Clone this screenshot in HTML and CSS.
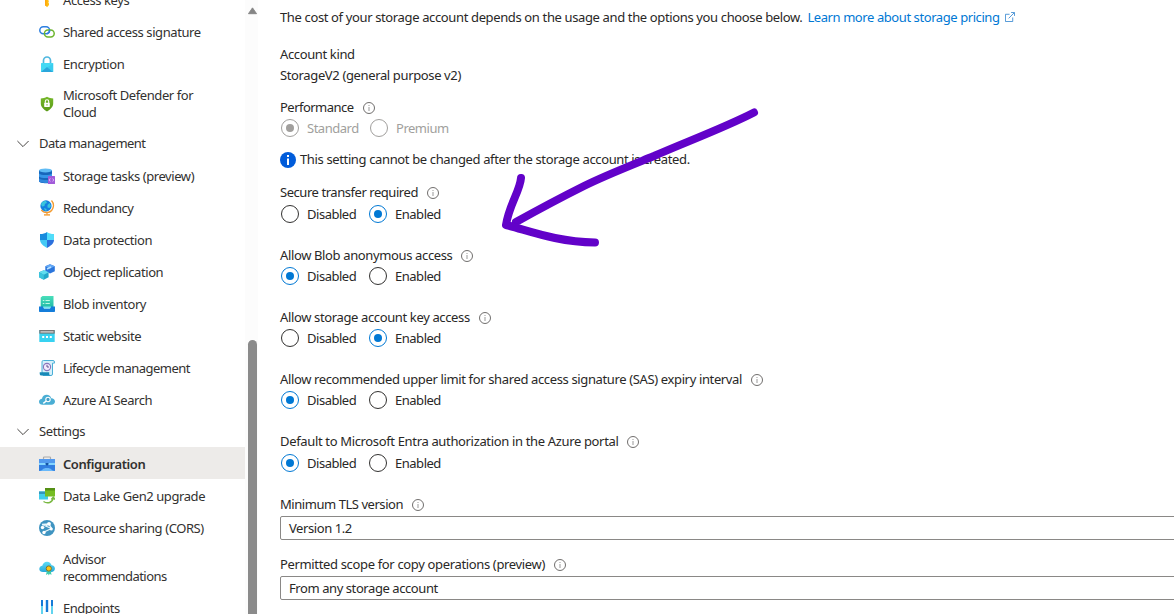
FILE: index.html
```html
<!DOCTYPE html>
<html lang="en">
<head>
<meta charset="utf-8">
<title>Configuration</title>
<link rel="stylesheet" href="styles.css">
</head>
<body>
<svg class="defs" width="0" height="0" aria-hidden="true">
  <defs>
    <linearGradient id="cyan" x1="0" y1="0" x2="0" y2="1"><stop offset="0" stop-color="#5cdcf5"/><stop offset="1" stop-color="#28a9dc"/></linearGradient>
    <linearGradient id="green" x1="0" y1="0" x2="0" y2="1"><stop offset="0" stop-color="#76b82a"/><stop offset="1" stop-color="#5a9a18"/></linearGradient>
    <linearGradient id="mint" x1="0" y1="0" x2="0" y2="1"><stop offset="0" stop-color="#4adfba"/><stop offset="1" stop-color="#20b9a7"/></linearGradient>
    <symbol id="info" viewBox="0 0 12 12"><circle cx="6" cy="6" r="5.500" fill="none" stroke="#605e5c" stroke-width=".9"/><path d="M6 5v4M6 3v1" stroke="#999" stroke-width="1"/></symbol>
    <symbol id="chev" viewBox="0 0 12 8"><path d="M.4 1 6 6.600 11.600 1" fill="none" stroke="#484644" stroke-width="1"/></symbol>
  </defs>
</svg>
<div class="page">
  <nav class="sidebar">
    <a class="item"><svg class="icon" viewBox="0 0 16 16"><path d="M6 6h4v2l-.8.8.8 1-.8 1 .8.8V13L8 15.300 6.200 13z" fill="#ffbd13"/><path d="M6.800 6v8" stroke="#ff9b00"/></svg><span>Access keys</span></a>
    <a class="item"><svg class="icon" viewBox="0 0 16 16" fill="none" stroke-width="1.500"><rect x=".8" y="2.700" width="9.800" height="7" rx="3.500" stroke="#2d7fe0"/><rect x="5.400" y="6" width="9.800" height="7" rx="3.500" stroke="#6cb52d"/><path d="M8 9.700C9.700 9.300 10.600 8 10.600 6" stroke="#2d7fe0"/></svg><span>Shared access signature</span></a>
    <a class="item"><svg class="icon" viewBox="0 0 16 16"><path d="M4.500 8V4.500a3.500 3.500 0 0 1 7 0V8" fill="none" stroke="#4fb7df" stroke-width="1.700"/><rect x="2" y="7" width="12.200" height="9" rx=".6" fill="#43d9f4"/><path d="m2 16 6-5 6.200 5z" fill="#2ba6db"/><path d="m2 7.500 6 4 6.200-4V16z" fill="#2fbfe8" opacity=".45"/></svg><span>Encryption</span></a>
    <a class="item tall"><svg class="icon" viewBox="0 0 16 16"><path d="M8 .7c2 1.300 4 1.600 6.200 1.700v5.100c0 3.700-3 6-6.200 7.900C4.800 13.500 1.800 11.200 1.800 7.500V2.400C4 2.300 6 2 8 .7z" fill="url(#green)"/><rect x="5.200" y="6.800" width="5.600" height="4.200" rx=".4" fill="#fff"/><path d="M6.300 7V5.400a1.700 1.700 0 0 1 3.400 0V7" fill="none" stroke="#fff" stroke-width="1.100"/><path d="M8 8.200v1.300" stroke="#66a51f"/></svg><span>Microsoft Defender for<br>Cloud</span></a>
    <div class="group"><svg class="chev"><use href="#chev"/></svg><span class="tight">Data management</span></div>
    <a class="item"><svg class="icon" viewBox="0 0 16 16"><path d="M0 2v11c0 1.300 3 2.300 7 2.300s6-.5 6-2V2z" fill="#1766bb"/><path d="M0 5.500c2 2 11 2 13 0v3c-2 2-11 2-13 0z" fill="#3695e8"/><path d="M0 10.500c2 1.500 7 1.700 9 1.500v2.800c-4 .5-9 0-9-1.700z" fill="#3086dc"/><ellipse cx="6.500" cy="2.400" rx="6.500" ry="2" fill="#60bcf5"/><rect x="9" y="8" width="7" height="8" rx=".5" fill="#a25bd9"/><path d="m11.300 10.500-1 1.500 1 1.500m2.400-3 1 1.500-1 1.500" fill="none" stroke="#e7c9ff" stroke-width=".8"/></svg><span>Storage tasks (preview)</span></a>
    <a class="item"><svg class="icon" viewBox="0 0 16 16"><path d="M12.500.5c4.300 5 .8 12-4.700 12-2.300 0-4.200-.8-5.500-2.600M8 12.500v2" fill="none" stroke="#f39b31" stroke-width="1.300"/><path d="M5 14.200h6v1.400H5z" fill="#f39b31"/><circle cx="7" cy="5.900" r="5.600" fill="#1580df"/><path d="M2 4c1-2.500 3-3.500 5-3l1 2-2 .8-.6 2.200L3 6.500zM8.500 5l2-2 1.500 3-1.500 2-2-.5zM5 8l2.500 1v1.700L6 10.500z" fill="#3ac6dc"/></svg><span class="tight">Redundancy</span></a>
    <a class="item"><svg class="icon" viewBox="0 0 16 16"><path d="M8 0v8H1V2c3 0 5-.4 7-2z" fill="#168bdd"/><path d="M8 0c2 1.600 4 2 7 2v6H8z" fill="#51ddfa"/><path d="M8 8h7c0 3.700-3.800 6-7 8z" fill="#2c71dd"/><path d="M8 8H1c.2 3.700 4 6.200 7 8z" fill="#44c9f5"/></svg><span>Data protection</span></a>
    <a class="item"><svg class="icon" viewBox="0 0 16 16"><path d="m11 .2 4.800 2v5L11 9.600 6.300 7V2.300z" fill="#2b75dc"/><path d="m6.300 2.300 4.700-2 4.800 2L11 4.600z" fill="#62a7f6"/><path d="m8 5 4-2" stroke="#b6e1ff" stroke-width="1.500"/><path d="m4.800 6.300 4.800 2v5L4.800 15.800 0 13.300V8.300z" fill="#22a7ca"/><path d="m0 8.300 4.800-2 4.800 2-4.800 2.400z" fill="#61ddef"/><path d="M0 8.300l4.800 2.400v5.100L0 13.300z" fill="#3bc4dd"/></svg><span>Object replication</span></a>
    <a class="item"><svg class="icon" viewBox="0 0 16 16"><path d="M3.500 0h11v11.500H1.700V1.500z" fill="url(#mint)"/><path d="M3.800 4.500h1.500m1.200 0h4.300M3.800 7.500h1.500m1.200 0h4.300" stroke="#bff9e4" stroke-width="1.200"/><path d="M0 10.500h4l1 2h6l1-2h4v4.700q0 .8-.8.800H.8Q0 16 0 15.200z" fill="#147dda"/><path d="M4 10.500h8l-1 2H5z" fill="#79e5ef"/></svg><span>Blob inventory</span></a>
    <a class="item"><svg class="icon" viewBox="0 0 16 16"><rect x=".3" y="2" width="15.400" height="12" rx=".5" fill="#38d2f1"/><path d="M.3 2h15.400v3.600H.3z" fill="#757575"/><path d="M1.500 3.300h13v1.200h-13z" fill="#ddd"/><path d="M3.200 8h2v2h-2zm3.800 0h2v2H7zm3.800 0h2v2h-2z" fill="#fff"/></svg><span>Static website</span></a>
    <a class="item"><svg class="icon" viewBox="0 0 16 16"><path d="M3 12V1.800Q3 .5 4.500.5H14q1.500 0 1.500 1.600v1h-2V14q0 1.500-1.500 1.500H4z" fill="#d7f0fa" stroke="#4aafd7"/><path d="M.7 12.300h9.500v1.500q0 1.700 1.500 1.700H2.500Q.7 15.500.7 14z" fill="#1889b7"/><circle cx="8" cy="7" r="3.600" fill="#f3eafd" stroke="#8874bb" stroke-width="1.100"/><path d="M8 4.800V7h2" fill="none" stroke="#655391"/></svg><span class="tight">Lifecycle management</span></a>
    <a class="item"><svg class="icon" viewBox="0 0 16 16"><path d="M3.500 12.800C1.400 12.800 0 11.600 0 9.800 0 8.100 1.300 7 3 6.800c.3-2.400 2.300-4 4.700-4 2.300 0 4 1.300 4.600 3.400C14.500 6.300 16 7.600 16 9.500s-1.500 3.300-3.500 3.300z" fill="#4aaed4"/><circle cx="9" cy="7.500" r="2.200" fill="#439fc7" stroke="#fff" stroke-width="1.100"/><path d="m7.300 9-3 2.300" stroke="#fff" stroke-width="1.500"/></svg><span>Azure AI Search</span></a>
    <div class="group"><svg class="chev"><use href="#chev"/></svg><span>Settings</span></div>
    <a class="item selected"><svg class="icon" viewBox="0 0 16 16"><path d="M4.500 3.500V1.800q0-.8.800-.8h5.400q.8 0 .8.800v1.700" fill="none" stroke="#aaa" stroke-width="1.200"/><rect y="3" width="16" height="12" rx=".5" fill="#327ee0"/><path d="M0 3h16v4H0z" fill="#5299ee"/><path d="M0 7h16v2H0z" fill="#84d5ff"/><path d="M0 15c4-.3 3-3 8-3s4 2.700 8 3z" fill="#69b9fa"/><path d="M6.500 7h3v1.500L8 9.800 6.500 8.500z" fill="#1454a4"/></svg><span>Configuration</span></a>
    <a class="item"><svg class="icon" viewBox="0 0 16 16"><path d="M0 3.500h9v8H0z" fill="#41cdec"/><path d="M0 3.500h7v2.500H0z" fill="#3398bd"/><path d="M6 0h10v8.500H6z" fill="#76bd22"/><path d="M6 0h10v2.500H6z" fill="#559015"/><path d="M4.500 13.500c4 2.700 9.300 1.200 9.800-4m-2 2 2-2.300 1.600 2.300" fill="none" stroke="#79b841" stroke-width="1.500"/></svg><span>Data Lake Gen2 upgrade</span></a>
    <a class="item"><svg class="icon" viewBox="0 0 16 16"><circle cx="8" cy="8" r="8" fill="#3f94c1"/><path d="M3 4.500 10 4l2.500 4.500L5 12M3 4.500l9.500 4M10 4 4 7.500" fill="none" stroke="#e8f6fc" stroke-width="1.300"/><circle cx="3.500" cy="7.500" r="1.700" fill="#fff"/><circle cx="10" cy="3.800" r="1.900" fill="#fff"/><circle cx="12.300" cy="9" r="1.500" fill="#fff"/><circle cx="5" cy="12.500" r="1.700" fill="#fff"/></svg><span>Resource sharing (CORS)</span></a>
    <a class="item tall"><svg class="icon" viewBox="0 0 16 16"><path d="M4 12c-2.200 0-3.700-1.300-3.700-3.100 0-1.700 1.300-2.900 3-3.100C3.700 3.400 5.500 1.700 8 1.700c2.300 0 4.100 1.500 4.600 3.600 2 .1 3.300 1.500 3.300 3.300 0 2-1.500 3.400-3.500 3.400z" fill="url(#cyan)"/><path d="m8 10-1 5 2-1.200.8 1.800.9-1.800 1.700 1.200-.5-5z" fill="#3bccae"/><circle cx="9.800" cy="8.500" r="2.600" fill="#ffc414" stroke="#7d742e"/></svg><span>Advisor<br><span class="tight">recommendations</span></span></a>
    <a class="item"><svg class="icon" viewBox="0 0 16 16"><path d="M2 0h2v16H2zm4.800 0h2.400v12H6.800zM12 0h2v16h-2z" fill="#167bd8"/><path d="M2 6h2v10H2zm10 0h2v10h-2z" fill="#62d4ef"/></svg><span class="tight">Endpoints</span></a>
  </nav>
  <div class="scrollbar"><svg class="up" viewBox="0 0 10 8"><path d="M5 .5 9.500 7h-9z" fill="#858585" stroke="#858585" stroke-linejoin="round"/></svg><div class="thumb"></div></div>
  <main class="content">
    <div class="line cost"><span>The cost of your storage account depends on the usage and the options you choose below.</span><a class="link">Learn more about storage pricing</a><svg class="ext" viewBox="0 0 11 11" fill="none" stroke="#2f83cf" stroke-width=".9"><path d="M5 2.500H.5v8h8V6M4 7l6-6M6.700.5h3.800v3.800"/></svg></div>
    <div class="line"><span>Account kind</span></div>
    <div class="line value"><span>StorageV2 (general purpose v2)</span></div>
    <div class="line perf"><span class="tight">Performance</span><svg class="info"><use href="#info"/></svg></div>
    <div class="radios off"><label><i class="dot on"></i>Standard</label><label><i class="dot"></i>Premium</label></div>
    <div class="line notice"><svg class="badge" viewBox="0 0 16 16"><circle cx="8" cy="8" r="8" fill="#015cda"/><path d="M7 6.500h2V13H7zM7 3h2v2H7z" fill="#fff"/></svg><span>This setting cannot be changed after the storage account is created.</span></div>
    <div class="line secure"><span class="snug">Secure transfer required</span><svg class="info"><use href="#info"/></svg></div>
    <div class="radios sec"><label><i class="dot"></i>Disabled</label><label><i class="dot on"></i>Enabled</label></div>
    <div class="line field"><span>Allow Blob anonymous access</span><svg class="info"><use href="#info"/></svg></div>
    <div class="radios"><label><i class="dot on"></i>Disabled</label><label><i class="dot"></i>Enabled</label></div>
    <div class="line field"><span>Allow storage account key access</span><svg class="info"><use href="#info"/></svg></div>
    <div class="radios"><label><i class="dot"></i>Disabled</label><label><i class="dot on"></i>Enabled</label></div>
    <div class="line field"><span>Allow recommended upper limit for shared access signature (SAS) expiry interval</span><svg class="info"><use href="#info"/></svg></div>
    <div class="radios"><label><i class="dot on"></i>Disabled</label><label><i class="dot"></i>Enabled</label></div>
    <div class="line field"><span class="loose">Default to Microsoft Entra authorization in the Azure portal</span><svg class="info"><use href="#info"/></svg></div>
    <div class="radios entra"><label><i class="dot on"></i>Disabled</label><label><i class="dot"></i>Enabled</label></div>
    <div class="line field"><span class="snug">Minimum TLS version</span><svg class="info"><use href="#info"/></svg></div>
    <div class="select"><span>Version 1.2</span></div>
    <div class="line scope"><span class="loose">Permitted scope for copy operations (preview)</span><svg class="info"><use href="#info"/></svg></div>
    <div class="select"><span>From any storage account</span></div>
  </main>
  <svg class="arrow" viewBox="0 0 270 150" fill="none" stroke="#6202c9" stroke-width="8" stroke-linecap="round" stroke-linejoin="round"><path d="M254 12.500C226 27 186 42 154 56C122 69 104 76 84 86C58 99 34 112 16 122"/><path d="M21 78C20 91 9 105 6 125C27 130 56 142 95 142.500"/></svg>
</div>
</body>
</html>
```
FILE: styles.css
```css
* { box-sizing: border-box; }
body { margin: 0; background: #fff; color: #292827; font: 13px/17px "Noto Sans", "Open Sans", sans-serif; overflow: hidden; letter-spacing: -.365px; }
.defs { position: absolute; }
svg { display: block; flex: none; }
span, a, label { white-space: nowrap; }
.page { position: relative; display: flex; width: 1174px; height: 614px; overflow: hidden; }
.sidebar { flex: none; width: 245px; margin-top: -17px; color: #323130; letter-spacing: -.42px; }
.tight { letter-spacing: -.53px; }
.snug { letter-spacing: -.45px; }
.loose { letter-spacing: -.345px; }
.item { display: flex; align-items: center; gap: 8px; height: 32px; padding: 2px 0 0 39px; }
.item.tall { height: 48px; }
.item.selected { background: #edebe9; font-weight: 600; }
.icon { width: 16px; height: 16px; }
.group { display: flex; align-items: center; gap: 10px; height: 32px; padding-left: 17px; }
.chev { width: 12px; height: 8px; margin-top: 1px; }
.scrollbar { flex: none; width: 13px; padding: 7px 1px 0 3px; background: #fcfcfc; }
.up { width: 9px; height: 8px; }
.thumb { width: 9px; height: 290px; margin-top: 325px; border-radius: 5px 5px 0 0; background: #8b8b8b; }
.content { flex: 1; padding: 8px 0 0 22px; }
.line { display: flex; align-items: center; height: 20px; }
.cost { margin: -1px 0 17px; gap: 5px; }
.link { color: #0078d4; letter-spacing: -.42px; }
.ext { width: 10px; height: 10px; }
.value { margin-top: 1px; }
.perf { margin-top: 12px; }
.info { width: 12px; height: 12px; margin: 2px 0 0 9px; }
.radios { display: flex; height: 20px; margin-top: 1px; letter-spacing: -.48px; }
.radios label { display: flex; align-items: center; width: 88px; padding-left: 1px; }
.radios.off { color: #a19f9d; }
.radios.off label { width: 89px; }
.dot { display: grid; place-items: center; flex: none; width: 18px; height: 18px; margin-right: 8px; border: 1px solid #323130; border-radius: 50%; }
.dot.on { border-color: #0078d4; }
.dot.on::after { content: ""; width: 8px; height: 8px; border-radius: 50%; background: #0078d4; }
.off .dot { border-color: #a19f9d; }
.off .dot.on::after { background: #a19f9d; }
.notice { margin-top: 12px; gap: 4px; }
.notice span { padding-bottom: 2px; }
.badge { width: 16px; height: 16px; }
.secure { margin-top: 12px; }
.sec, .entra { margin-top: 2px; }
.field { margin-top: 21px; }
.select { display: flex; align-items: center; height: 24px; margin: 2px -4px 0 0; padding-left: 8px; border: 1px solid #8a8886; border-radius: 2px; letter-spacing: -.42px; }
.scope { margin-top: 14px; }
.arrow { position: absolute; left: 500px; top: 100px; width: 270px; height: 150px; }
```
